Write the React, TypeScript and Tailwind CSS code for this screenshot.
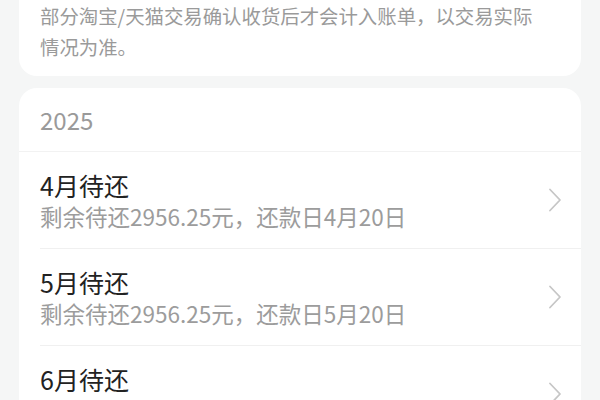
const bills = [
  { month: 4, remain: "2956.25", due: "4月20日" },
  { month: 5, remain: "2956.25", due: "5月20日" },
  { month: 6, remain: "2956.25", due: "6月20日" },
];

export default function App() {
  return (
    <div
      className="h-[400px] w-[600px] overflow-hidden bg-[#f5f6f6]"
      style={{ fontFamily: '"Noto Sans CJK SC", "Noto Sans", sans-serif' }}
    >
      <div className="-mt-[40px] px-[19px]">
        <div className="rounded-[18px] bg-white pb-[14px] pl-[21px] pr-[36px] pt-[40px]">
          <p className="text-[19.4px] leading-[31px] text-[#9a9a9a]">
            部分淘宝/天猫交易确认收货后才会计入账单，以交易实际情况为准。
          </p>
        </div>

        <div className="mt-[12px] rounded-[18px] bg-white">
          <div className="flex h-[64px] items-center border-b border-[#f2f2f2] px-[21px] text-[24px] text-[#9a9a9a]">
            2025
          </div>
          {bills.map((bill, i) => (
            <div
              key={bill.month}
              className={`ml-[21px] ${i > 0 ? "border-t border-[#f0f0f0]" : ""}`}
            >
              <div className="flex h-[96px] items-center pr-[19px]">
                <div className="flex-1 pt-[1px]">
                  <div className="text-[25px] leading-[31px] text-[#222]">
                    {bill.month}月待还
                  </div>
                  <div className="text-[22.5px] leading-[31px] text-[#9c9c9c]">
                    剩余待还{bill.remain}元，还款日{bill.due}
                  </div>
                </div>
                <svg
                  width="14"
                  height="24"
                  viewBox="0 0 14 24"
                  fill="none"
                  stroke="#c6c6c6"
                  strokeWidth="1.8"
                  strokeLinecap="round"
                  strokeLinejoin="round"
                >
                  <polyline points="2,1.5 12,12 2,22.5" />
                </svg>
              </div>
            </div>
          ))}
        </div>
      </div>
    </div>
  );
}
